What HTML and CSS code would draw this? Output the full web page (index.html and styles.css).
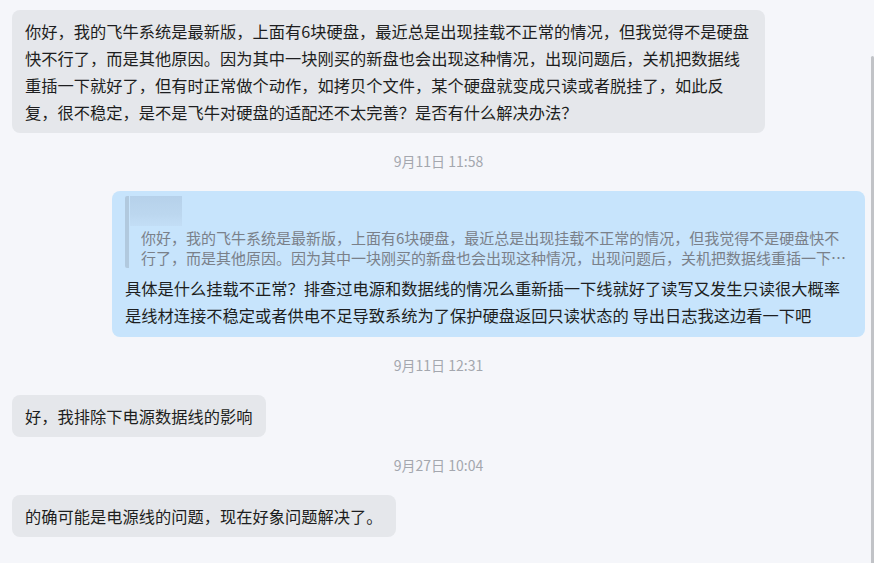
FILE: index.html
```html
<!DOCTYPE html>
<html lang="zh-CN">
<head>
<meta charset="utf-8">
<title>Chat</title>
<link rel="stylesheet" href="styles.css">
</head>
<body>
<div class="chat">
  <div class="msg msg-left">你好，我的飞牛系统是最新版，上面有6块硬盘，最近总是出现挂载不正常的情况，但我觉得不是硬盘快不行了，而是其他原因。因为其中一块刚买的新盘也会出现这种情况，出现问题后，关机把数据线重插一下就好了，但有时正常做个动作，如拷贝个文件，某个硬盘就变成只读或者脱挂了，如此反复，很不稳定，是不是飞牛对硬盘的适配还不太完善？是否有什么解决办法？</div>
  <div class="time">9月11日 11:58</div>
  <div class="msg msg-right">
    <div class="quote">
      <div class="quote-name"></div>
      <div class="quote-text">你好，我的飞牛系统是最新版，上面有6块硬盘，最近总是出现挂载不正常的情况，但我觉得不是硬盘快不行了，而是其他原因。因为其中一块刚买的新盘也会出现这种情况，出现问题后，关机把数据线重插一下就好了，但有时正常做个动作，如拷贝个文件，某个硬盘就变成只读或者脱挂了，如此反复，很不稳定，是不是飞牛对硬盘的适配还不太完善？是否有什么解决办法？</div>
    </div>
    <div class="msg-body">具体是什么挂载不正常？排查过电源和数据线的情况么重新插一下线就好了读写又发生只读很大概率是线材连接不稳定或者供电不足导致系统为了保护硬盘返回只读状态的 导出日志我这边看一下吧</div>
  </div>
  <div class="time">9月11日 12:31</div>
  <div class="msg msg-left">好，我排除下电源数据线的影响</div>
  <div class="time">9月27日 10:04</div>
  <div class="msg msg-left">的确可能是电源线的问题，现在好象问题解决了。</div>
</div>
<div class="scroll-thumb"></div>
</body>
</html>
```
FILE: styles.css
```css
html, body {
  margin: 0;
  height: 100%;
  background: #f5f6fa;
  overflow: hidden;
}
body {
  font-family: "Noto Sans CJK SC", "Noto Sans", sans-serif;
  color: #1d1e20;
  position: relative;
}
.chat {
  display: flex;
  flex-direction: column;
  padding: 10px 9px 0 12px;
}
.msg {
  box-sizing: border-box;
  max-width: 753px;
  border-radius: 8px;
  padding: 8px 13px 7px 13px;
  font-size: 16.25px;
  line-height: 27px;
}
.msg-left {
  align-self: flex-start;
  background: #e5e7eb;
}
.msg-right {
  align-self: flex-end;
  background: #c7e4fc;
  padding-top: 12px;
  padding-bottom: 8px;
}
.quote {
  border-left: 4px solid #b1c9de;
  border-radius: 2px;
  padding-left: 12px;
}
.quote-name {
  width: 52px;
  height: 30px;
  margin: -7px 0 2px -11px;
  background: linear-gradient(180deg, #b6d1ea 0%, #bcd7ef 60%, #c3def6 100%);
  filter: blur(0.6px);
}
.quote-text {
  font-size: 15px;
  line-height: 20px;
  color: #7a8089;
  display: -webkit-box;
  -webkit-line-clamp: 2;
  -webkit-box-orient: vertical;
  overflow: hidden;
}
.msg-body {
  margin-top: 7px;
}
.time {
  text-align: center;
  font-size: 14px;
  line-height: 18px;
  color: #a4a7ae;
  margin: 19px 0 21px;
}
.scroll-thumb {
  position: absolute;
  right: 0;
  top: 56px;
  bottom: 0;
  width: 3px;
  background: #c1c3c7;
  border-radius: 2px 2px 0 0;
}
```
